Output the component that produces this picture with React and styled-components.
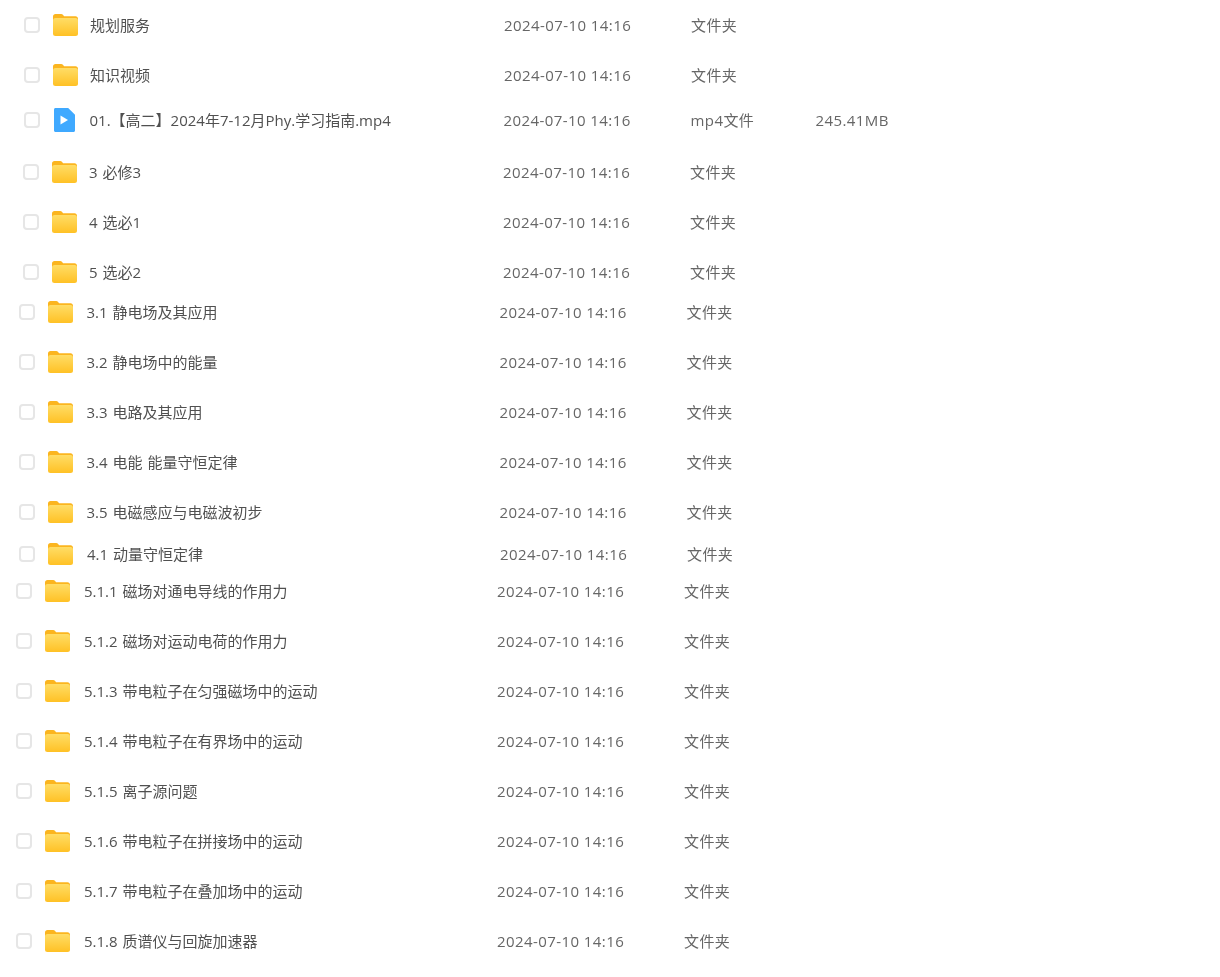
import React from "react";
import styled, { createGlobalStyle } from "styled-components";

const Global = createGlobalStyle`
  html, body { margin: 0; padding: 0; background: #fff; }
  body { font-family: "Open Sans", "Noto Sans CJK SC", sans-serif; }
`;

const List = styled.div`
  display: flex;
  flex-direction: column;
  width: 1220px;
  height: 977px;
  overflow: hidden;
  filter: blur(0.4px);
`;

const Row = styled.div`
  display: grid;
  grid-template-columns: 29px ${(p) => (p.$wide ? 39 : 37)}px ${(p) => (p.$wide ? 413 : 414)}px 187px 125px 1fr;
  align-items: center;
  flex: none;
  height: 36px;
  margin-top: ${(p) => p.$gap}px;
  padding-left: ${(p) => p.$indent}px;
`;

const Check = styled.span`
  display: block;
  box-sizing: border-box;
  width: 16px;
  height: 16px;
  border: 2px solid #e6e6e6;
  border-radius: 4px;
  background: #fff;
`;

const Icon = styled.svg`
  display: block;
  width: 26px;
  height: 24px;
`;

const Name = styled.span`
  font-size: 15px;
  word-spacing: 1px;
  color: #505050;
  white-space: pre;
  padding-bottom: 2px;
`;

const Meta = styled.span`
  font-size: 15px;
  letter-spacing: 0.42px;
  color: #666;
  white-space: pre;
`;

const TypeMeta = styled(Meta)`
  padding-bottom: 2px;
`;

const FolderIcon = () => (
  <Icon viewBox="0 0 26 24">
    <defs>
      <linearGradient id="fg" x1="0" y1="0" x2="0" y2="1">
        <stop offset="0" stopColor="#ffdd66" />
        <stop offset="1" stopColor="#ffc125" />
      </linearGradient>
    </defs>
    <path d="M0 3.500C0 2 1 1 2.500 1h5.600c.9 0 1.500.4 2 1l1 1.200h11.400C24 3.200 25 4.200 25 5.700v3H0z" fill="#fbb51f" />
    <rect x="0" y="5" width="25" height="18" rx="2.500" fill="url(#fg)" />
  </Icon>
);

const VideoIcon = () => (
  <Icon viewBox="0 0 26 24">
    <path d="M1 1.500C1 .7 1.700 0 2.500 0h12.700L22 6.800v15.700c0 .8-.7 1.500-1.500 1.500h-18C1.700 24 1 23.300 1 22.500z" fill="#3fa9ff" />
    <path d="M7.500 7.500v9l7.500-4.500z" fill="#fff" />
  </Icon>
);

const T = "文件夹";
const rows = [
  [7, 24, "规划服务"],
  [14, 24, "知识视频"],
  [9, 23.5, "01.【高二】2024年7-12月Phy.学习指南.mp4", "mp4文件", "245.41MB"],
  [16, 23, "3 必修3"],
  [14, 23, "4 选必1"],
  [14, 23, "5 选必2"],
  [4, 18.5, "3.1 静电场及其应用", true],
  [14, 18.5, "3.2 静电场中的能量", true],
  [14, 18.5, "3.3 电路及其应用", true],
  [14, 18.5, "3.4 电能 能量守恒定律", true],
  [14, 18.5, "3.5 电磁感应与电磁波初步", true],
  [6, 19, "4.1 动量守恒定律", true],
  [1, 16, "5.1.1 磁场对通电导线的作用力", true],
  [14, 16, "5.1.2 磁场对运动电荷的作用力", true],
  [14, 16, "5.1.3 带电粒子在匀强磁场中的运动", true],
  [14, 16, "5.1.4 带电粒子在有界场中的运动", true],
  [14, 16, "5.1.5 离子源问题", true],
  [14, 16, "5.1.6 带电粒子在拼接场中的运动", true],
  [14, 16, "5.1.7 带电粒子在叠加场中的运动", true],
  [14, 16, "5.1.8 质谱仪与回旋加速器", true],
].map(([gap, indent, name, a, b]) =>
  typeof a === "string" ? { gap, indent, name, type: a, size: b } : { gap, indent, name, wide: a }
);

export default function App() {
  return (
    <>
      <Global />
      <List>
        {rows.map(({ gap, indent, name, type, size, wide }) => (
          <Row key={name} $gap={gap} $indent={indent} $wide={wide}>
            <Check />
            {size ? <VideoIcon /> : <FolderIcon />}
            <Name>{name}</Name>
            <Meta>2024-07-10 14:16</Meta>
            <TypeMeta>{type || T}</TypeMeta>
            <Meta>{size || ""}</Meta>
          </Row>
        ))}
      </List>
    </>
  );
}
